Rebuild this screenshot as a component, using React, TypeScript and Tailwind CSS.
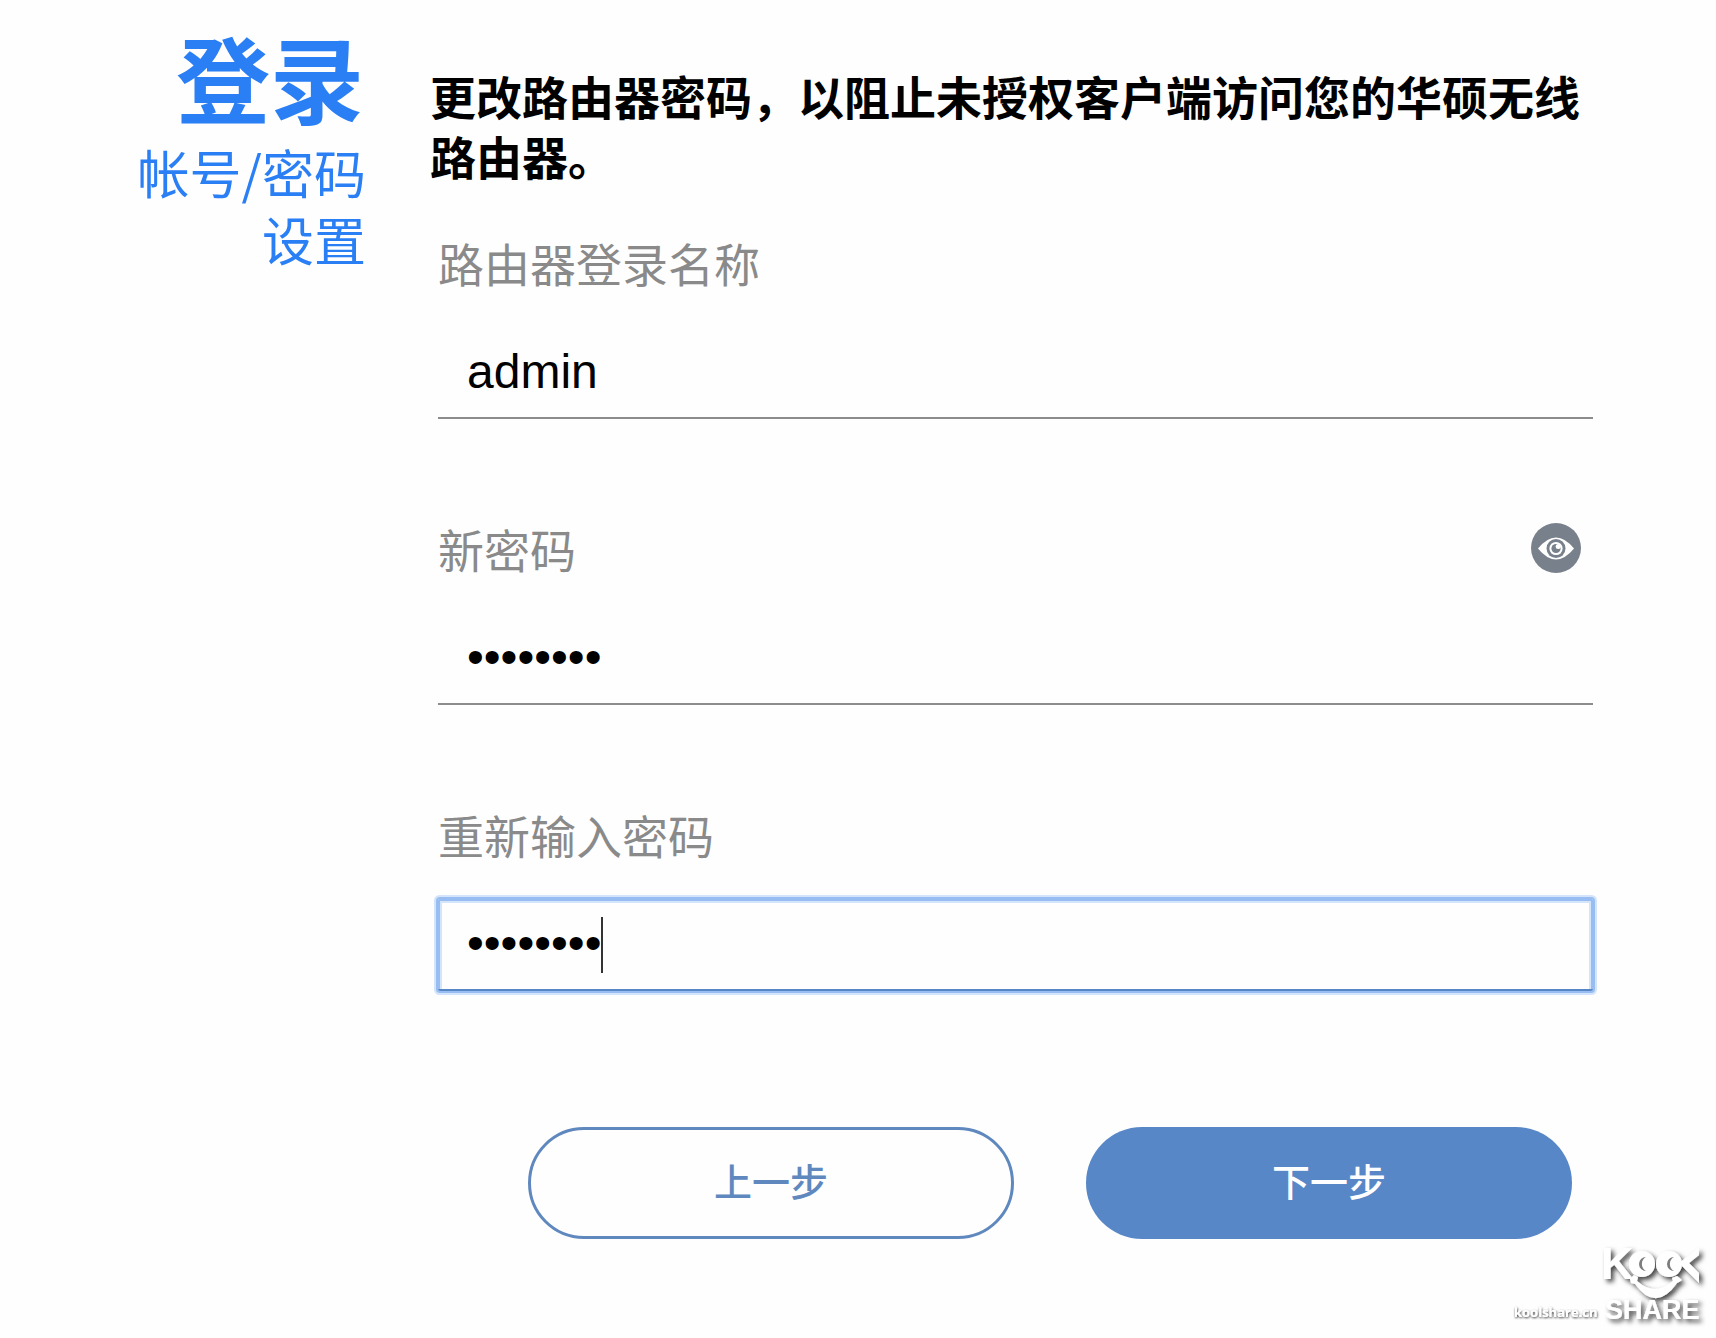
import { useState } from "react";

interface FieldProps {
  id: string;
  label: string;
  type: string;
  value: string;
  onChange: (value: string) => void;
  focused?: boolean;
  action?: React.ReactNode;
}

function Field({ id, label, type, value, onChange, focused, action }: FieldProps) {
  return (
    <div>
      <div className="flex items-center justify-between pr-3">
        <label htmlFor={id} className="text-[46px] leading-[60px] text-[#8a8a8a]">
          {label}
        </label>
        {action}
      </div>
      <div className="relative mt-[35px]">
        <input
          id={id}
          type={type}
          value={value}
          onChange={(e) => onChange(e.target.value)}
          className={`block h-[92px] w-full border-b-2 px-[29px] font-['Liberation_Sans',Arial,sans-serif] text-5xl text-black outline-none ${
            type === "password" ? "pb-1" : "pb-0.5"
          } ${
            focused
              ? "rounded-xs border-[#5686c6] caret-transparent shadow-[0_0_0_2px_#97bdf3,0_0_0_4px_#d3e4fb,inset_0_2px_#97bdf3,inset_2px_0_#97bdf3,inset_-2px_0_#97bdf3,inset_0_4px_#d3e4fb,inset_4px_0_#d3e4fb,inset_-4px_0_#d3e4fb]"
              : "border-[#8c8c8c]"
          }`}
        />
        {/* Text caret */}
        {focused && <span className="absolute top-[18px] left-[163px] h-14 w-0.5 bg-[#333]" />}
      </div>
    </div>
  );
}

function EyeIcon() {
  return (
    <svg viewBox="0 0 50 50" className="size-[50px]" aria-hidden="true">
      <circle cx="25" cy="25" r="25" fill="#78818b" />
      <path d="M7 25.5 Q25 3.5 43 25.5 Q25 47.5 7 25.5Z" fill="#fff" />
      <circle cx="25" cy="25.5" r="9.5" fill="#78818b" />
      <circle cx="25" cy="25.5" r="6.6" fill="#fff" />
      <circle cx="25" cy="25.5" r="4.6" fill="#78818b" />
      <circle cx="27.2" cy="23.4" r="2.5" fill="#fff" />
    </svg>
  );
}

function Watermark() {
  return (
    <div className="absolute right-0 bottom-0">
      <svg viewBox="0 0 210 108" className="h-[108px] w-[210px]" aria-hidden="true">
        <defs>
          <filter id="logo-shadow" x="-20%" y="-20%" width="140%" height="150%">
            <feDropShadow dx="3" dy="3" stdDeviation="2.5" floodColor="#000" floodOpacity="0.75" />
          </filter>
          <filter id="url-shadow" x="-10%" y="-30%" width="120%" height="180%">
            <feDropShadow dx="0.5" dy="1" stdDeviation="0.9" floodColor="#000" floodOpacity="0.8" />
          </filter>
        </defs>
        <g filter="url(#logo-shadow)" fill="#fff" fontFamily="'Liberation Sans', Arial, sans-serif" fontWeight="bold">
          <text x="95" y="49" fontSize="45">K</text>
          {/* Eyes */}
          <circle cx="136" cy="34" r="13" />
          <circle cx="163" cy="34" r="13" />
          <path d="M193 18l-20 15 20 20v-10l-10-10 10-8Z" />
          {/* Smile */}
          <path d="M124 49l4-4 4 2-1 4q18 16 36 0l-1-3 5-2 5 4-3 2-2 1q-21 30-42 1l-4-1Z" />
          <text x="99" y="89" fontSize="27">SHARE</text>
        </g>
        {/* Crescent pupils */}
        <g fill="#7d7d7d">
          <path d="M140 27a7 7 0 1 0 0 14a8 8 0 0 1 0-14Z" />
          <path d="M168 27a7 7 0 1 0 0 14a8 8 0 0 1 0-14Z" />
        </g>
        <text
          x="8"
          y="87"
          fontSize="13"
          fontFamily="'Open Sans', sans-serif"
          fontWeight="bold"
          fill="#fff"
          filter="url(#url-shadow)"
        >
          koolshare.cn
        </text>
      </svg>
    </div>
  );
}

export default function App() {
  const [name, setName] = useState("admin");
  const [password, setPassword] = useState("password");
  const [confirm, setConfirm] = useState("password");
  const [visible, setVisible] = useState(false);

  return (
    <div
      lang="zh-CN"
      className="relative flex min-h-screen items-start bg-[#fefefe] font-['Noto_Sans_CJK_SC',sans-serif]"
    >
      <aside className="w-[366px] shrink-0 pt-7 pl-[120px] text-right text-[#2a7ff5]">
        <h1 className="pr-0.5 text-[94px] leading-[96px] font-bold">登录</h1>
        <p className="mt-3.5 text-[52px] leading-[67px]">帐号/密码设置</p>
      </aside>

      <main className="min-w-0 flex-1 pt-[65px] pr-[123px] pl-16">
        <h2 className="text-[46px] leading-[60px] font-bold text-black">
          更改路由器密码，以阻止未授权客户端访问您的华硕无线路由器。
        </h2>

        <form className="mt-[47px] pl-2" onSubmit={(e) => e.preventDefault()}>
          <div className="flex flex-col gap-[99px]">
            <Field id="name" label="路由器登录名称" type="text" value={name} onChange={setName} />
            <Field
              id="password"
              label="新密码"
              type={visible ? "text" : "password"}
              value={password}
              onChange={setPassword}
              action={
                <button type="button" aria-label="显示密码" onClick={() => setVisible(!visible)}>
                  <EyeIcon />
                </button>
              }
            />
            <Field
              id="confirm"
              label="重新输入密码"
              type={visible ? "text" : "password"}
              value={confirm}
              onChange={setConfirm}
              focused
            />
          </div>

          <div className="mt-[136px] grid grid-cols-2 gap-[72px] pr-[21px] pl-[90px] text-[38px] font-medium">
            <button
              type="button"
              className="h-28 rounded-full border-3 border-[#5f88be] pb-2 text-[#5f88be]"
            >
              上一步
            </button>
            <button type="submit" className="h-28 rounded-full bg-[#5887c8] pb-2 text-white">
              下一步
            </button>
          </div>
        </form>
      </main>

      <Watermark />
    </div>
  );
}
